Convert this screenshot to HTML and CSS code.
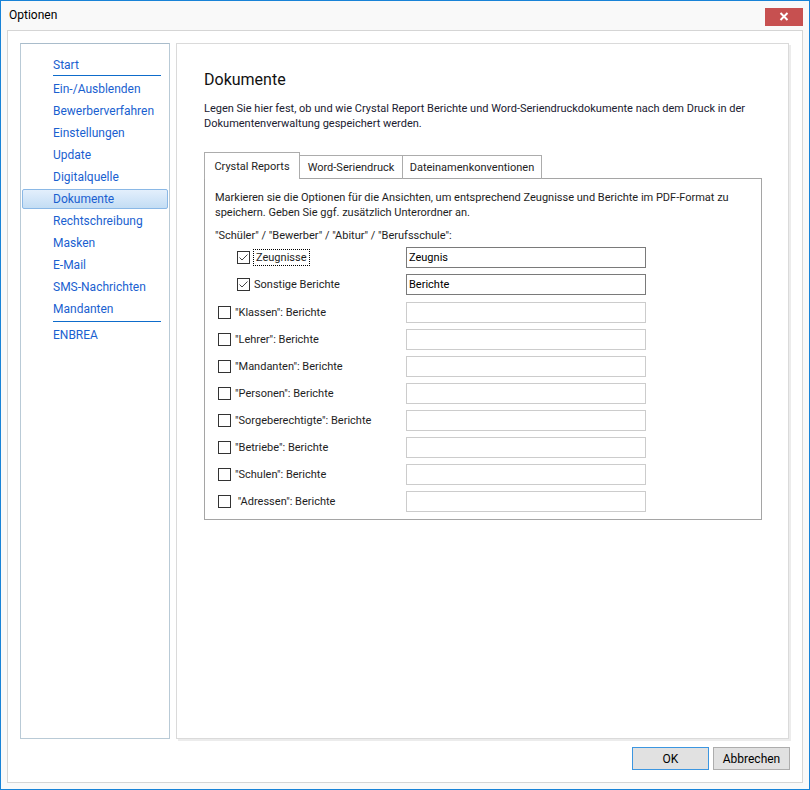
FILE: index.html
```html
<!DOCTYPE html>
<html lang="de">

<head>
    <meta charset="UTF-8">
    <title>Optionen</title>
    <link rel="stylesheet" href="styles.css">
</head>

<body>
    <div class="window">
        <div class="titlebar">
            <span class="title">Optionen</span>
            <span class="close">
                <svg width="10" height="9" viewBox="0 0 10 9">
                    <path d="M1.5 1 L8.5 8 M8.5 1 L1.5 8" stroke="#fff" stroke-width="2" />
                </svg>
            </span>
        </div>

        <div class="frame">
            <div class="main">
                <div class="nav">
                    <div class="nav-item">Start</div>
                    <div class="nav-sep"></div>
                    <div class="nav-item">Ein-/Ausblenden</div>
                    <div class="nav-item">Bewerberverfahren</div>
                    <div class="nav-item">Einstellungen</div>
                    <div class="nav-item">Update</div>
                    <div class="nav-item">Digitalquelle</div>
                    <div class="nav-item selected">Dokumente</div>
                    <div class="nav-item">Rechtschreibung</div>
                    <div class="nav-item">Masken</div>
                    <div class="nav-item">E-Mail</div>
                    <div class="nav-item">SMS-Nachrichten</div>
                    <div class="nav-item">Mandanten</div>
                    <div class="nav-sep"></div>
                    <div class="nav-item">ENBREA</div>
                </div>

                <div class="page">
                    <h1>Dokumente</h1>
                    <p class="intro">
                        Legen Sie hier fest, ob und wie Crystal Report Berichte und Word-Seriendruckdokumente nach dem Druck in der<br>
                        Dokumentenverwaltung gespeichert werden.
                    </p>

                    <div class="tabs">
                        <div class="tab active">Crystal Reports</div>
                        <div class="tab tab-word">Word-Seriendruck</div>
                        <div class="tab tab-names">Dateinamenkonventionen</div>
                    </div>
                    <div class="tab-panel">
                        <p class="hint">
                            Markieren sie die Optionen für die Ansichten, um entsprechend Zeugnisse und Berichte im PDF-Format zu<br>
                            speichern. Geben Sie ggf. zusätzlich Unterordner an.
                        </p>
                        <div class="group-label">"Schüler" / "Bewerber" / "Abitur" / "Berufsschule":</div>

                        <div class="rows">
                            <div class="row sub">
                                <label class="check">
                                    <span class="box">
                                        <svg width="11" height="11" viewBox="0 0 11 11">
                                            <path d="M1.5 5.5 L4 8 L9.5 2.5" fill="none" stroke="#444" stroke-width="1" />
                                        </svg>
                                    </span>
                                    <span class="focus">Zeugnisse</span>
                                </label>
                                <input class="field" type="text" value="Zeugnis">
                            </div>
                            <div class="row sub">
                                <label class="check">
                                    <span class="box">
                                        <svg width="11" height="11" viewBox="0 0 11 11">
                                            <path d="M1.5 5.5 L4 8 L9.5 2.5" fill="none" stroke="#444" stroke-width="1" />
                                        </svg>
                                    </span>
                                    <span>Sonstige Berichte</span>
                                </label>
                                <input class="field" type="text" value="Berichte">
                            </div>
                            <div class="row first-plain">
                                <label class="check"><span class="box"></span><span>"Klassen": Berichte</span></label>
                                <input class="field" type="text" disabled>
                            </div>
                            <div class="row">
                                <label class="check"><span class="box"></span><span>"Lehrer": Berichte</span></label>
                                <input class="field" type="text" disabled>
                            </div>
                            <div class="row">
                                <label class="check"><span class="box"></span><span>"Mandanten": Berichte</span></label>
                                <input class="field" type="text" disabled>
                            </div>
                            <div class="row">
                                <label class="check"><span class="box"></span><span>"Personen": Berichte</span></label>
                                <input class="field" type="text" disabled>
                            </div>
                            <div class="row">
                                <label class="check"><span class="box"></span><span>"Sorgeberechtigte": Berichte</span></label>
                                <input class="field" type="text" disabled>
                            </div>
                            <div class="row">
                                <label class="check"><span class="box"></span><span>"Betriebe": Berichte</span></label>
                                <input class="field" type="text" disabled>
                            </div>
                            <div class="row">
                                <label class="check"><span class="box"></span><span>"Schulen": Berichte</span></label>
                                <input class="field" type="text" disabled>
                            </div>
                            <div class="row">
                                <label class="check"><span class="box"></span><span>&nbsp;"Adressen": Berichte</span></label>
                                <input class="field" type="text" disabled>
                            </div>
                        </div>
                    </div>
                </div>
            </div>

            <div class="buttons">
                <button class="btn default">OK</button>
                <button class="btn">Abbrechen</button>
            </div>
        </div>
    </div>
</body>

</html>
```

FILE: styles.css
```css
body{
    margin: 0;
    background-color: #ffffff;
    font-family: Roboto, "Noto Sans", sans-serif;
    font-size: 11px;
    color: #1e1e1e;
}
.window{
    width: 810px;
    height: 790px;
    box-sizing: border-box;
    border: 1px solid #1883d7;
    background-color: #f9f9f9;
    display: flex;
    flex-direction: column;
}
.titlebar{
    height: 29px;
    display: flex;
    align-items: center;
    justify-content: space-between;
    padding-left: 8px;
}
.title{
    font-size: 12px;
    color: #000;
    padding-bottom: 1px;
}
.close{
    width: 38px;
    height: 18px;
    margin-top: 2px;
    margin-right: 6px;
    background-color: #c75050;
    display: flex;
    align-items: center;
    justify-content: center;
}
.frame{
    margin: 0 6px;
    height: 753px;
    box-sizing: border-box;
    border: 1px solid #d5d5d5;
    background-color: #ffffff;
    padding: 12px 12px 12px 12px;
    display: flex;
    flex-direction: column;
}
.main{
    height: 696px;
    display: flex;
    gap: 6px;
}

/* left navigation */
.nav{
    width: 150px;
    box-sizing: border-box;
    border: 1px solid #b9cad6;
    border-top-color: #a9bccb;
    padding-top: 11px;
}
.nav-item{
    margin: 0 1px 2px 1px;
    padding-left: 30px;
    height: 18px;
    line-height: 18px;
    border: 1px solid transparent;
    border-radius: 2px;
    font-size: 12px;
    color: #1a5fd0;
}
.nav-item:first-child{
    margin-bottom: 0;
}
.nav-item.selected{
    background-image: linear-gradient(to bottom, #e3effc, #c3ddf4);
    border-color: #8ab8e6;
}
.nav-sep{
    width: 108px;
    height: 1px;
    margin: 0 0 3px 32px;
    background-color: #0e6ccb;
}

/* content page */
.page{
    flex: 1;
    margin-right: 1px;
    border: 1px solid #dadada;
    box-shadow: 2px 2px 0 #ececec;
    padding: 26px 0 0 27px;
}
h1{
    margin: 0;
    font-size: 16px;
    font-weight: normal;
    line-height: 20px;
    color: #111;
}
.intro{
    margin: 11px 0 0 0;
    line-height: 15px;
    color: #202030;
}
.tabs{
    margin-top: 21px;
    display: flex;
    align-items: flex-end;
    margin-bottom: -1px;
}
.tab{
    box-sizing: border-box;
    height: 24px;
    padding-top: 4px;
    line-height: 15px;
    text-align: center;
    border: 1px solid #acacac;
    border-bottom: none;
    border-left: none;
    color: #1e1e1e;
}
.tab.active{
    position: relative;
    width: 96px;
    height: 27px;
    padding-top: 6px;
    border-left: 1px solid #acacac;
    background-color: #ffffff;
}
.tab-word{
    width: 103px;
}
.tab-names{
    width: 139px;
}
.tab-panel{
    width: 558px;
    box-sizing: border-box;
    border: 1px solid #a5a5a5;
    padding: 11px 0 7px 10px;
}
.hint{
    margin: 0;
    line-height: 15px;
}
.group-label{
    margin-top: 8px;
    line-height: 15px;
}
.rows{
    margin-top: 4px;
    display: flex;
    flex-direction: column;
    gap: 6px;
}
.row{
    display: grid;
    grid-template-columns: 191px 240px;
    align-items: center;
    height: 21px;
}
.row.first-plain{
    margin-top: 1px;
}
.check{
    display: flex;
    align-items: center;
    gap: 4px;
    padding-left: 3px;
}
.row.sub .check{
    padding-left: 22px;
}
.box{
    width: 11px;
    height: 11px;
    border: 1px solid #333;
    background-color: #fff;
    display: flex;
}
.focus{
    outline: 1px dotted #000;
    padding: 0 2px;
    line-height: 15px;
}
.field{
    box-sizing: border-box;
    width: 240px;
    height: 21px;
    margin: 0;
    padding: 0 2px;
    border: 1px solid #7a7a7a;
    background-color: #fff;
    font-family: Roboto, "Noto Sans", sans-serif;
    font-size: 11px;
    color: #000;
}
.field:disabled{
    border-color: #cccccc;
}

/* dialog buttons */
.buttons{
    margin-top: 8px;
    display: flex;
    justify-content: flex-end;
    gap: 4px;
}
.btn{
    width: 77px;
    height: 23px;
    padding: 0;
    border: 1px solid #adadad;
    background-color: #e1e1e1;
    font-family: Roboto, "Noto Sans", sans-serif;
    font-size: 12px;
    color: #000;
}
.btn.default{
    border-color: #3c96e0;
}
```
